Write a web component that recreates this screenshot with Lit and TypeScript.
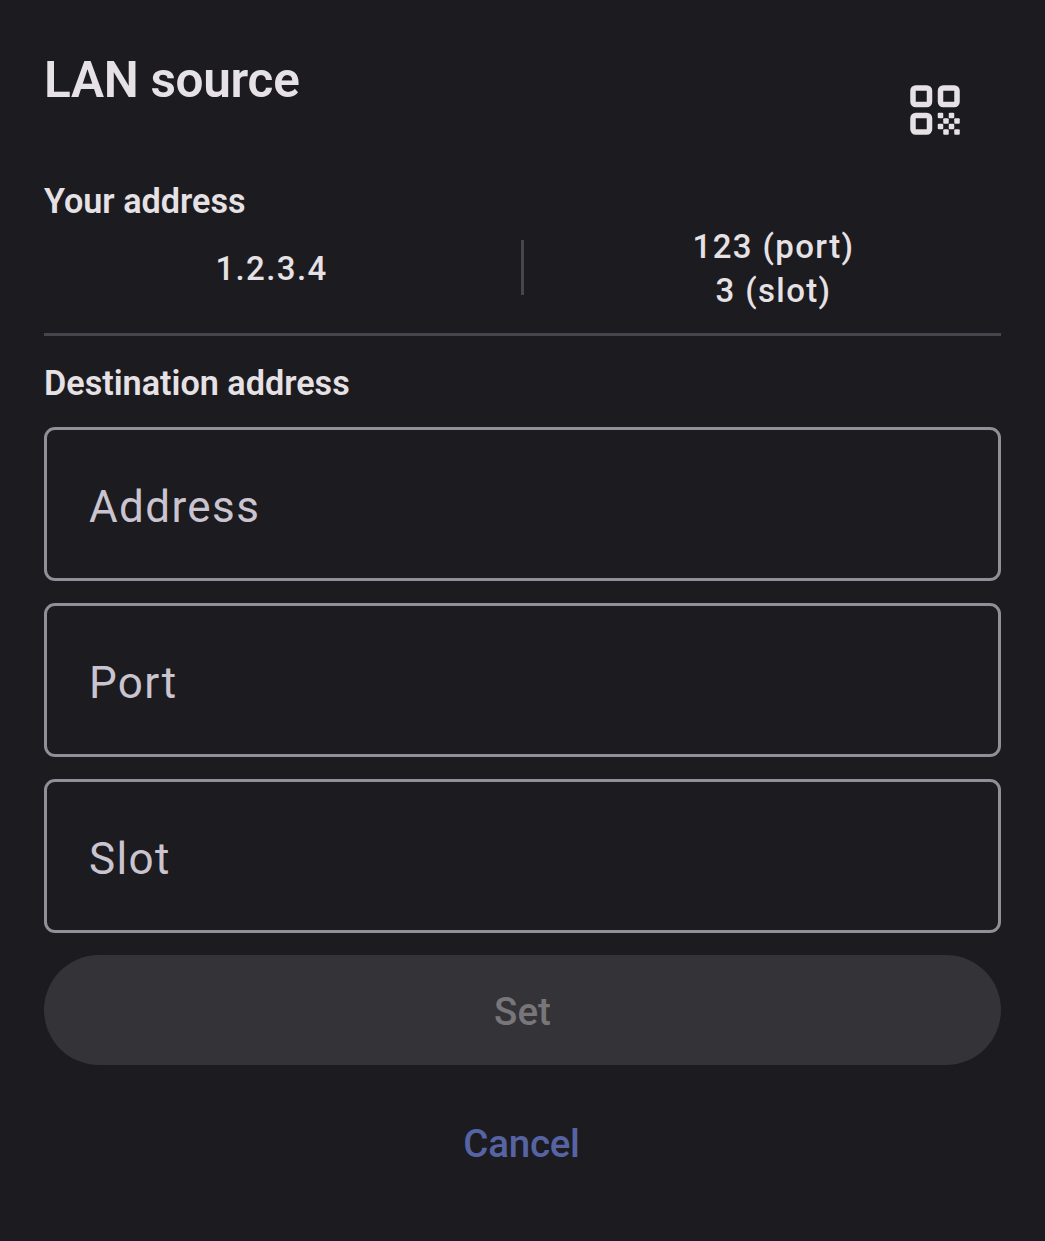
import { LitElement, html, css, svg } from "lit";
import { customElement } from "lit/decorators.js";

@customElement("app-root")
export class AppRoot extends LitElement {
  static styles = css`
    :host { display: block; }
    * { box-sizing: border-box; }
    .dialog {
      width: 1045px; height: 1241px; background: #1c1b1f; color: #e6e1e5;
      padding: 44px 44px 0; display: flex; flex-direction: column;
      font-family: Roboto, sans-serif; font-weight: 500;
    }
    .head { display: flex; justify-content: space-between; height: 132px; }
    .title { margin: 0; font-size: 49.5px; line-height: 72px; font-weight: 600; letter-spacing: -0.3px; }
    .scan { width: 66px; height: 66px; margin: 33px 33px 0 0; padding: 0; border: 0; background: none; color: #e6e1e5; }
    .scan svg { display: block; width: 66px; height: 66px; }
    .label { margin: 0; font-size: 34.2px; line-height: 50px; font-weight: 600; }
    .mine { display: flex; align-items: center; height: 83px; font-size: 33px; line-height: 44px; letter-spacing: 1.375px; text-align: center; }
    .cell { flex: 1; padding: 3px 22px 0 0; }
    .cell + .rule + .cell { padding: 3px 0 0 22px; }
    .rule { width: 3px; height: 55px; background: #49454f; }
    .line { height: 3px; background: #49454f; margin: 24px 0 22px; flex: none; }
    .fields { display: flex; flex-direction: column; gap: 22px; margin-top: 19px; }
    .field {
      height: 154px; border: 3px solid #938f99; border-radius: 11px; padding: 6px 42px 0;
      display: flex; align-items: center; color: #cac4d0; font-size: 44px; font-weight: 400; letter-spacing: 1.375px;
    }
    .btn { height: 110px; border: 0; border-radius: 55px; font: 500 38.5px Roboto, sans-serif; padding: 2px 0 0; flex: none; }
    .set { margin-top: 22px; background: #343337; color: #787679; letter-spacing: 0.1px; }
    .cancel { margin-top: 22px; background: none; color: #5664a4; letter-spacing: -0.25px; padding-right: 2px; }
  `;

  render() {
    const modules = [[13, 13], [17, 13], [15, 15], [19, 15], [13, 17], [17, 17], [15, 19], [19, 19]];
    return html`
      <main class="dialog">
        <header class="head">
          <h1 class="title">LAN source</h1>
          <button class="scan" aria-label="QR code">
            <svg viewBox="0 0 24 24" fill="none" stroke="currentColor" stroke-width="2">
              <rect x="4" y="4" width="6" height="6" rx="1" />
              <rect x="14" y="4" width="6" height="6" rx="1" />
              <rect x="4" y="14" width="6" height="6" rx="1" />
              ${modules.map(([x, y]) => svg`<rect x=${x} y=${y} width="2" height="2" rx=".4" fill="currentColor" stroke="none" />`)}
            </svg>
          </button>
        </header>
        <h2 class="label">Your address</h2>
        <section class="mine">
          <div class="cell">1.2.3.4</div>
          <div class="rule"></div>
          <div class="cell">123 (port)<br />3 (slot)</div>
        </section>
        <div class="line"></div>
        <h2 class="label">Destination address</h2>
        <div class="fields">
          ${["Address", "Port", "Slot"].map((f) => html`<div class="field"><span>${f}</span></div>`)}
        </div>
        <button class="btn set">Set</button>
        <button class="btn cancel">Cancel</button>
      </main>
    `;
  }
}
